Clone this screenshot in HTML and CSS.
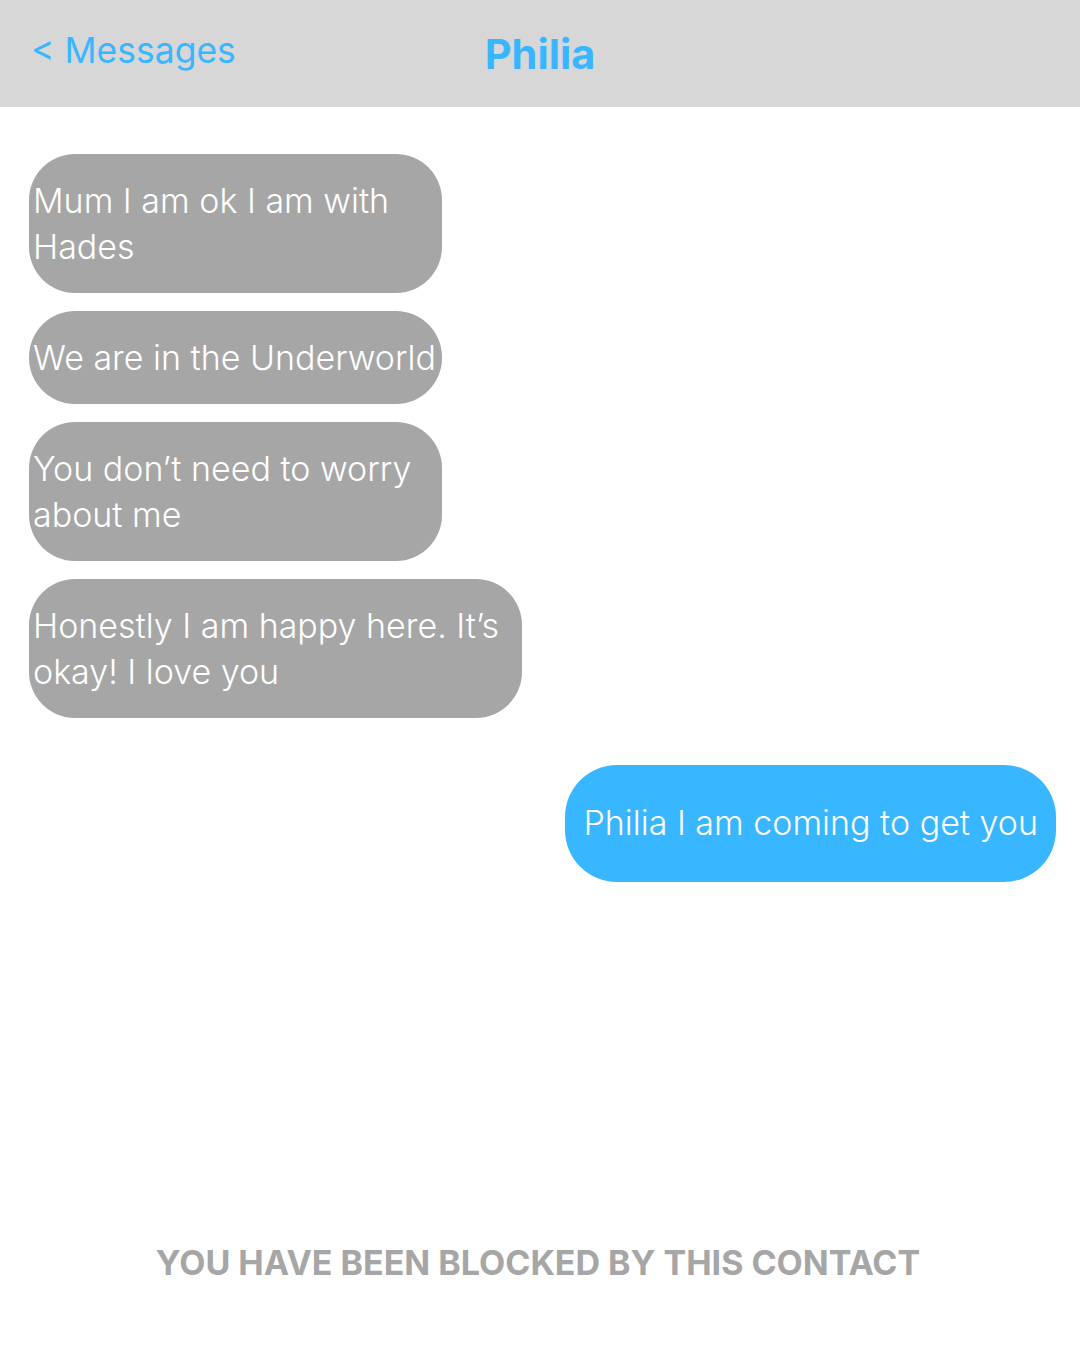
FILE: index.html
```html
<!DOCTYPE html>
<html lang="en">
<head>
<meta charset="utf-8">
<title>Philia</title>
<link rel="stylesheet" href="styles.css">
</head>
<body>
<header class="topbar">
  <a class="back">&lt; Messages</a>
  <h1 class="title">Philia</h1>
  <span class="spacer"></span>
</header>
<main class="chat">
  <div class="thread">
    <p class="bubble in w413">Mum I am ok I am with<br>Hades</p>
    <p class="bubble in w413">We are in the Underworld</p>
    <p class="bubble in w413">You don’t need to worry<br>about me</p>
    <p class="bubble in w493">Honestly I am happy here. It’s<br>okay! I love you</p>
    <p class="bubble out">Philia I am coming to get you</p>
  </div>
  <p class="blocked">YOU HAVE BEEN BLOCKED BY THIS CONTACT</p>
</main>
</body>
</html>
```
FILE: styles.css
```css
html, body {
  margin: 0;
  padding: 0;
  background: #ffffff;
}
body {
  width: 1080px;
  height: 1350px;
  overflow: hidden;
  font-family: Inter, "Noto Sans", sans-serif;
}
.topbar {
  box-sizing: border-box;
  height: 107px;
  background: #d7d7d7;
  display: grid;
  grid-template-columns: 1fr auto 1fr;
  align-items: start;
  padding: 30px 31px 0 31px;
  color: #38b6ff;
}
.back {
  justify-self: start;
  font-size: 35.5px;
  line-height: 1.2;
  font-weight: 400;
  text-decoration: none;
}
.title {
  margin: 0;
  font-size: 41.5px;
  line-height: 1.2;
  font-weight: 700;
}
.chat {
  display: flex;
  flex-direction: column;
  padding: 47px 24px 0 29px;
}
.thread {
  display: flex;
  flex-direction: column;
  align-items: flex-start;
  gap: 18px;
}
.bubble {
  margin: 0;
  box-sizing: border-box;
  font-weight: 300;
  font-size: 34px;
  line-height: 46px;
  color: #ffffff;
  white-space: nowrap;
  border-radius: 46px;
}
.in {
  background: #a6a6a6;
  padding: 24px 4px 23px 4px;
}
.w413 { width: 413px; }
.w493 { width: 493px; }
.out {
  align-self: flex-end;
  background: #38b6ff;
  padding: 35px 18px 36px 18px;
  margin-top: 29px;
  border-radius: 52px;
}
.blocked {
  margin: 361px 9px 0 0;
  text-align: center;
  font-weight: 700;
  font-size: 34px;
  line-height: 1.2;
  color: #a6a6a6;
}
```
